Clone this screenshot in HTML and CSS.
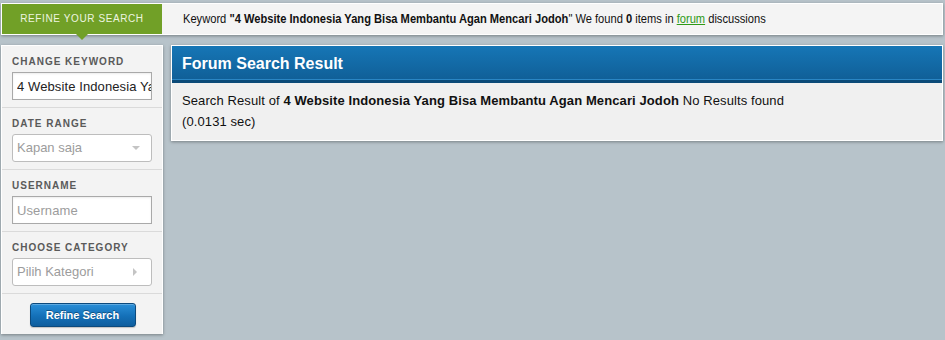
FILE: index.html
```html
<!DOCTYPE html>
<html>
<head>
<meta charset="utf-8">
<link rel="stylesheet" href="styles.css">
</head>
<body>
<div class="topbar">
  <div class="refine-tab">REFINE YOUR SEARCH</div>
  <div class="keyword-info"><span class="keyword-text">Keyword <b>"4 Website Indonesia Yang Bisa Membantu Agan Mencari Jodoh</b>" We found <b>0</b> items in <a href="#" class="forum-link">forum</a> discussions</span></div>
</div>
<div class="content">
  <aside class="sidebar">
    <div class="side-section">
      <div class="side-label">CHANGE KEYWORD</div>
      <input class="text-input filled" type="text" value="4 Website Indonesia Yang Bisa Membantu Agan Mencari Jodoh">
    </div>
    <div class="side-section">
      <div class="side-label">DATE RANGE</div>
      <div class="select-input"><span>Kapan saja</span><span class="arrow-down"></span></div>
    </div>
    <div class="side-section">
      <div class="side-label">USERNAME</div>
      <input class="text-input" type="text" placeholder="Username">
    </div>
    <div class="side-section">
      <div class="side-label">CHOOSE CATEGORY</div>
      <div class="select-input"><span>Pilih Kategori</span><span class="arrow-right"></span></div>
    </div>
    <div class="side-section button-section">
      <button class="refine-btn">Refine Search</button>
    </div>
  </aside>
  <main class="result-panel">
    <div class="result-header">Forum Search Result</div>
    <div class="result-body">
      <div>Search Result of <b>4 Website Indonesia Yang Bisa Membantu Agan Mencari Jodoh</b> No Results found</div>
      <div>(0.0131 sec)</div>
    </div>
  </main>
</div>
</body>
</html>
```

FILE: styles.css
```css
html, body {
  margin: 0;
  padding: 0;
}
body {
  background: #b7c3ca;
  font-family: "Liberation Sans", Arial, sans-serif;
  color: #111;
  padding: 3px 2px 0 1px;
  height: 340px;
  box-sizing: border-box;
  overflow: hidden;
}
.topbar {
  display: flex;
  height: 32px;
  box-sizing: border-box;
  border: 1px solid #fff;
  background: #f4f4f4;
  box-shadow: 0 1px 3px rgba(0, 0, 0, 0.35);
}
.refine-tab {
  position: relative;
  width: 160px;
  flex: none;
  background: #71a027;
  color: #eef5e0;
  font-size: 10px;
  letter-spacing: 0.6px;
  line-height: 30px;
  text-align: center;
}
.refine-tab::after {
  content: "";
  position: absolute;
  left: 74px;
  bottom: -6px;
  border-left: 6px solid transparent;
  border-right: 6px solid transparent;
  border-top: 6px solid #71a027;
}
.keyword-info {
  padding-left: 21px;
  font-size: 13px;
  line-height: 29px;
  color: #111;
  white-space: nowrap;
}
.keyword-text {
  display: inline-block;
  transform: scaleX(0.856);
  transform-origin: left center;
}
.forum-link {
  color: #2f9a17;
  text-decoration: underline;
}
.content {
  display: flex;
  gap: 8px;
  margin-top: 10px;
  align-items: flex-start;
}
.sidebar {
  width: 162px;
  flex: none;
  box-sizing: border-box;
  background: #f3f3f3;
  border: 1px solid #fff;
  border-bottom: none;
  box-shadow: 0 1px 3px rgba(0, 0, 0, 0.35);
}
.side-section {
  padding: 9px 10px 7px 10px;
  border-bottom: 1px solid #dadada;
}
.side-label {
  font-size: 10px;
  font-weight: bold;
  letter-spacing: 1px;
  color: #5a5a5a;
  line-height: 14px;
  margin-bottom: 3px;
}
.text-input {
  display: block;
  width: 100%;
  height: 28px;
  box-sizing: border-box;
  margin: 0;
  background: #fff;
  border: 1px solid #a9a9a9;
  border-radius: 0;
  box-shadow: inset 0 1px 2px rgba(0, 0, 0, 0.08);
  font-family: "Liberation Sans", Arial, sans-serif;
  font-size: 13px;
  line-height: 26px;
  padding: 0 0 0 4px;
  letter-spacing: 0.1px;
  color: #222;
  outline: none;
}
.text-input::placeholder {
  color: #9c9c9c;
  opacity: 1;
}
.select-input {
  height: 28px;
  box-sizing: border-box;
  background: #fff;
  border: 1px solid #bdbdbd;
  border-radius: 3px;
  font-size: 13px;
  line-height: 26px;
  padding: 0 10px 0 4px;
  color: #9c9c9c;
  display: flex;
  justify-content: space-between;
  align-items: center;
}
.arrow-down {
  width: 0;
  height: 0;
  border-left: 4px solid transparent;
  border-right: 4px solid transparent;
  border-top: 4px solid #c4c4c4;
  margin-right: 1px;
}
.arrow-right {
  width: 0;
  height: 0;
  border-top: 4px solid transparent;
  border-bottom: 4px solid transparent;
  border-left: 4px solid #c4c4c4;
  margin-right: 4px;
}
.button-section {
  border-bottom: none;
  padding: 9px 0 7px;
  display: flex;
  justify-content: center;
}
.refine-btn {
  width: 106px;
  height: 24px;
  border: 1px solid #0c4a7d;
  border-radius: 3px;
  background: linear-gradient(#2a8fd8, #1470b8 55%, #0f5e9e);
  color: #fff;
  font-family: "Liberation Sans", Arial, sans-serif;
  font-size: 11px;
  font-weight: bold;
  text-shadow: 0 -1px 0 rgba(0, 0, 0, 0.35);
  box-shadow: inset 0 1px 0 rgba(255, 255, 255, 0.25), 0 1px 1px rgba(0, 0, 0, 0.2);
  padding: 0;
  margin-left: 1px;
}
.result-panel {
  flex: 1;
  border: 1px solid #fff;
  background: #f0f0f0;
  box-shadow: 0 1px 3px rgba(0, 0, 0, 0.35);
}
.result-header {
  height: 34px;
  box-sizing: border-box;
  padding: 2px 0 0 10px;
  line-height: 32px;
  background: linear-gradient(#1676b6, #105f97);
  box-shadow: inset 0 -1px 0 #2a86c4;
  color: #fff;
  font-size: 16px;
  font-weight: bold;
}
.result-body {
  border-top: 3px solid #0b4a78;
  padding: 7px 10px 8px;
  font-size: 13px;
  line-height: 21px;
  color: #111;
  letter-spacing: 0.1px;
}
```
